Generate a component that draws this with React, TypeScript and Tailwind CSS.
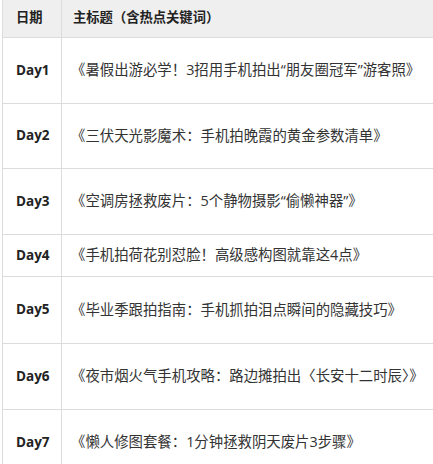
import React from "react";

const rows = [
  { day: "Day1", title: "《暑假出游必学！3招用手机拍出“朋友圈冠军”游客照》", h: "h-[66px]" },
  { day: "Day2", title: "《三伏天光影魔术：手机拍晚霞的黄金参数清单》", h: "h-[65px]" },
  { day: "Day3", title: "《空调房拯救废片：5个静物摄影“偷懒神器”》", h: "h-[66px]" },
  { day: "Day4", title: "《手机拍荷花别怼脸！高级感构图就靠这4点》", h: "h-[42px]" },
  { day: "Day5", title: "《毕业季跟拍指南：手机抓拍泪点瞬间的隐藏技巧》", h: "h-[67px]" },
  { day: "Day6", title: "《夜市烟火气手机攻略：路边摊拍出〈长安十二时辰〉》", h: "h-[66px]" },
  { day: "Day7", title: "《懒人修图套餐：1分钟拯救阴天废片3步骤》", h: "h-[66px]" },
];

export default function App() {
  return (
    <div className="w-[433px] h-[464px] overflow-hidden bg-white pl-[2px] font-['Open_Sans','Noto_Sans_CJK_SC',sans-serif] text-[#333]">
      <table className="border-collapse w-[440px] text-left">
        <thead>
          <tr className="h-[37px] bg-[#efefef]">
            <th className="border border-[#dcdcdc] border-t-0 w-[59px] pl-[13px] text-[13.3px] font-bold text-[#222]">日期</th>
            <th className="border border-[#dcdcdc] border-t-0 pl-[11px] text-[13.3px] font-bold text-[#222]">主标题（含热点关键词）</th>
          </tr>
        </thead>
        <tbody>
          {rows.map((r) => (
            <tr key={r.day} className={r.h}>
              <td className="border border-[#dcdcdc] pl-[13px] text-[13.5px] font-bold text-[#222]">{r.day}</td>
              <td className="border border-[#dcdcdc] pl-[9px] text-[14.4px] whitespace-nowrap">{r.title}</td>
            </tr>
          ))}
        </tbody>
      </table>
    </div>
  );
}
